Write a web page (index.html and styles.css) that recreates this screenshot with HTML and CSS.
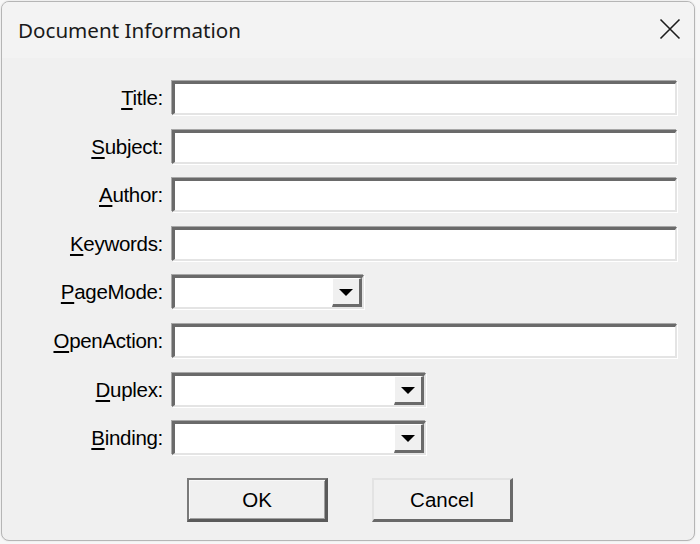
FILE: index.html
```html
<!DOCTYPE html>
<html>
<head>
<meta charset="utf-8">
<link rel="stylesheet" href="styles.css">
</head>
<body>
<div class="window">
  <div class="titlebar">
    <span class="title">Document Information</span>
    <span class="close">
      <svg width="22" height="22" viewBox="0 0 22 22"><path d="M1.5 1.5 L20.5 20.5 M20.5 1.5 L1.5 20.5" stroke="#1c1c1c" stroke-width="1.6" fill="none"/></svg>
    </span>
  </div>
  <div class="body">
    <div class="form">
      <label class="lbl"><u>T</u>itle:</label><div class="field"></div>
      <label class="lbl"><u>S</u>ubject:</label><div class="field"></div>
      <label class="lbl"><u>A</u>uthor:</label><div class="field"></div>
      <label class="lbl"><u>K</u>eywords:</label><div class="field"></div>
      <label class="lbl"><u>P</u>ageMode:</label><div class="field combo short"><span class="drop"><span class="arrow"></span></span></div>
      <label class="lbl"><u>O</u>penAction:</label><div class="field"></div>
      <label class="lbl"><u>D</u>uplex:</label><div class="field combo long"><span class="drop"><span class="arrow"></span></span></div>
      <label class="lbl"><u>B</u>inding:</label><div class="field combo long"><span class="drop"><span class="arrow"></span></span></div>
    </div>
    <div class="buttons">
      <div class="btn default">OK</div>
      <div class="btn">Cancel</div>
    </div>
  </div>
</div>
</body>
</html>
```

FILE: styles.css
```css
html, body {
  margin: 0;
  padding: 0;
  background: #f7f7f7;
}
body {
  padding: 1px 5px 3px 1px;
  width: 700px;
  height: 544px;
  box-sizing: border-box;
}
.window {
  height: 540px;
  border: 1px solid #b5b5b5;
  border-radius: 8px;
  background: #f0f0f0;
  overflow: hidden;
  box-sizing: border-box;
  box-shadow: 0 0 2px rgba(0,0,0,0.12);
}
.titlebar {
  height: 56px;
  background: #f3f3f3;
  display: flex;
  align-items: center;
  justify-content: space-between;
  padding: 0 13px 0 16px;
}
.title {
  font-family: "Noto Sans", "Open Sans", sans-serif;
  font-size: 20.6px;
  color: #1a1a1a;
  margin-top: 0;
}
.close {
  display: flex;
  margin-top: -2px;
}
.body {
  padding: 23px 17px 0 0;
}
.form {
  display: grid;
  grid-template-columns: 161px 1fr;
  column-gap: 9px;
  row-gap: 14.6px;
  align-items: center;
}
.lbl {
  font-family: "Liberation Sans", Arial, sans-serif;
  font-size: 20.5px;
  color: #000;
  text-align: right;
  line-height: 34px;
  letter-spacing: -0.3px;
}
.lbl u {
  text-decoration-thickness: 2px;
  text-underline-offset: 3px;
}
.field {
  height: 34px;
  box-sizing: border-box;
  background: #fff;
  border-style: solid;
  border-width: 3px 2px 2px 3px;
  border-color: #6a6a6a #e4e4e4 #e4e4e4 #6a6a6a;
  box-shadow: -1px -1px 0 #a8a8a8, 1px 1px 0 #ffffff;
  position: relative;
}
.combo {
  justify-self: start;
  display: flex;
  justify-content: flex-end;
  padding: 0;
}
.short { width: 192px; }
.long { width: 254px; }
.drop {
  width: 30px;
  height: 100%;
  box-sizing: border-box;
  background: #f0f0f0;
  border-style: solid;
  border-width: 1px 3px 3px 1px;
  border-color: #ffffff #6a6a6a #6a6a6a #ffffff;
  display: flex;
  align-items: center;
  justify-content: center;
}
.arrow {
  width: 0;
  height: 0;
  border-left: 7px solid transparent;
  border-right: 7px solid transparent;
  border-top: 7px solid #000;
  margin-top: 2px;
}
.buttons {
  display: flex;
  gap: 44px;
  padding: 23px 0 0 185px;
}
.btn {
  width: 141px;
  height: 44px;
  box-sizing: border-box;
  background: #f0f0f0;
  border-style: solid;
  border-width: 2px 3px 3px 2px;
  border-color: #e3e3e3 #696969 #696969 #e3e3e3;
  font-family: "Liberation Sans", Arial, sans-serif;
  font-size: 20.5px;
  display: flex;
  align-items: center;
  justify-content: center;
  color: #000;
}
.btn.default {
  border-color: #7a7a7a #5a5a5a #5a5a5a #7a7a7a;
  box-shadow: inset 1px 1px 0 #f8f8f8, inset -1px -1px 0 #a0a0a0;
}
```
